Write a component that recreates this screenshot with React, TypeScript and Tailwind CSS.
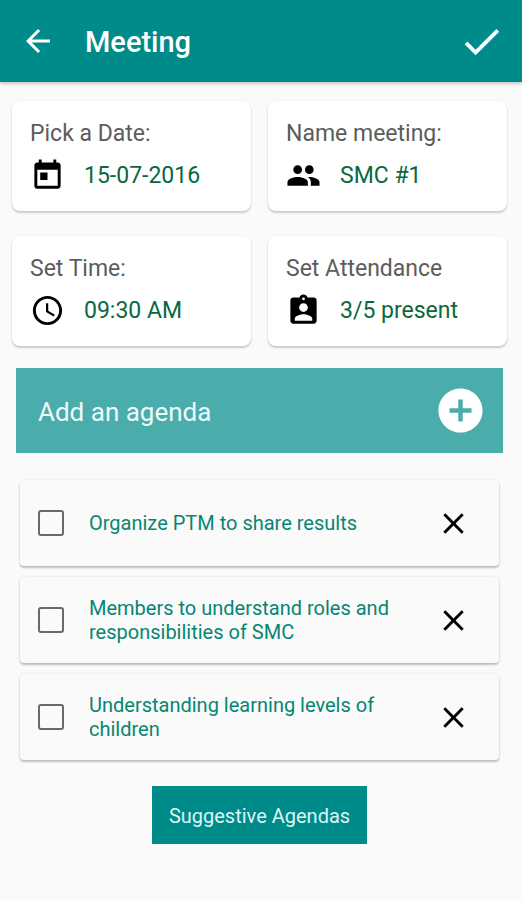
import { useState } from 'react';
import type { FormEvent } from 'react';
import type { IconType } from 'react-icons';
import { MdAccessTime, MdAddCircle, MdArrowBack, MdAssignmentInd, MdClose, MdDone, MdPeople, MdToday } from 'react-icons/md';

interface FieldDto {
  name: string;
  label: string;
  value: string;
  icon: IconType;
}

interface AgendaDto {
  id: number;
  text: string;
  checked: boolean;
}

const fields: FieldDto[] = [
  { name: 'date', label: 'Pick a Date:', value: '15-07-2016', icon: MdToday },
  { name: 'name', label: 'Name meeting:', value: 'SMC #1', icon: MdPeople },
  { name: 'time', label: 'Set Time:', value: '09:30 AM', icon: MdAccessTime },
  { name: 'attendance', label: 'Set Attendance', value: '3/5 present', icon: MdAssignmentInd },
];

const agendasInit: AgendaDto[] = [
  { id: 1, text: 'Organize PTM to share results', checked: false },
  { id: 2, text: 'Members to understand roles and responsibilities of SMC', checked: false },
  { id: 3, text: 'Understanding learning levels of children', checked: false },
];

function Header() {
  return (
    <header className="relative flex h-[82px] items-center bg-[#008b8b] pr-[17px] pl-5 text-white shadow-[0_1px_4px_rgba(0,0,0,0.3)]">
      <button type="button" aria-label="Back" className="cursor-pointer">
        <MdArrowBack size={36} />
      </button>
      <h1 className="ml-[29px] flex-1 pt-[2px] text-[29px] leading-9 font-medium">Meeting</h1>
      <button type="button" aria-label="Save" className="cursor-pointer">
        <MdDone size={47} />
      </button>
    </header>
  );
}

function FieldCard({ field }: { field: FieldDto }) {
  const [value, setValue] = useState(field.value);
  const Icon = field.icon;

  return (
    <div className="rounded-lg bg-white px-[18px] pt-[19px] pb-[18px] shadow-[0_2px_2px_rgba(0,0,0,0.18),0_0_2px_rgba(0,0,0,0.08)]">
      <label htmlFor={field.name} className="block text-[23px] leading-7 text-[#5c5c5c]">
        {field.label}
      </label>
      <div className="mt-[10px] flex items-center gap-[19px]">
        <Icon size={35} className="shrink-0 text-black" />
        <input
          id={field.name}
          type="text"
          value={value}
          onChange={(e) => setValue(e.target.value)}
          className="w-full min-w-0 bg-transparent text-[23px] leading-7 text-[#08693f] outline-none"
        />
      </div>
    </div>
  );
}

export default function App() {
  const [agendas, setAgendas] = useState<AgendaDto[]>(agendasInit);
  const [text, setText] = useState('');

  const handleAdd = (e: FormEvent) => {
    e.preventDefault();
    if (!text.trim()) return;
    setAgendas([...agendas, { id: Date.now(), text: text.trim(), checked: false }]);
    setText('');
  };

  const handleToggle = (id: number) => {
    setAgendas(agendas.map((i) => (i.id == id ? { ...i, checked: !i.checked } : i)));
  };

  return (
    <div className="min-h-screen bg-[#fafafa] font-[Roboto,sans-serif]">
      <Header />
      <main className="pt-[19px] pr-[15px] pb-14 pl-3">
        <div className="grid grid-cols-2 gap-x-[17px] gap-y-[25px]">
          {fields.map((f) => (
            <FieldCard key={f.name} field={f} />
          ))}
        </div>

        <form onSubmit={handleAdd} className="mx-1 mt-[22px] flex h-[85px] items-center bg-[#4aacab] pr-4 pl-[22px]">
          <input
            type="text"
            aria-label="Add an agenda"
            placeholder="Add an agenda"
            value={text}
            onChange={(e) => setText(e.target.value)}
            className="min-w-0 flex-1 bg-transparent pt-[2px] text-[26px] leading-8 text-white outline-none placeholder:text-[#eefafa]"
          />
          <button type="submit" aria-label="Add" className="cursor-pointer text-white">
            <MdAddCircle size={53} />
          </button>
        </form>

        <ul className="mx-2 mt-[27px] flex flex-col gap-[11px]">
          {agendas.map((i) => (
            <li
              key={i.id}
              className="flex min-h-[86px] items-center rounded-sm bg-[#fafafa] pr-7 pl-[18px] shadow-[0_2px_2px_rgba(0,0,0,0.22),0_0_3px_rgba(0,0,0,0.1)]"
            >
              <input
                id={`agenda-${i.id}`}
                type="checkbox"
                checked={i.checked}
                onChange={() => handleToggle(i.id)}
                className="size-[26px] shrink-0 cursor-pointer appearance-none rounded-[3px] border-2 border-[#6a6a6a] checked:bg-[#008b8b]"
              />
              <label htmlFor={`agenda-${i.id}`} className="ml-[25px] flex-1 text-[20px] leading-6 text-[#078573]">
                {i.text}
              </label>
              <button
                type="button"
                aria-label={`Remove ${i.text}`}
                onClick={() => setAgendas(agendas.filter((a) => a.id != i.id))}
                className="shrink-0 cursor-pointer text-black"
              >
                <MdClose size={35} />
              </button>
            </li>
          ))}
        </ul>

        <div className="mt-[26px] flex justify-center">
          <button type="button" className="cursor-pointer bg-[#008b8b] px-[17px] pt-4 pb-[14px] text-[20px] leading-7 text-[#dcf6f4]">
            Suggestive Agendas
          </button>
        </div>
      </main>
    </div>
  );
}
